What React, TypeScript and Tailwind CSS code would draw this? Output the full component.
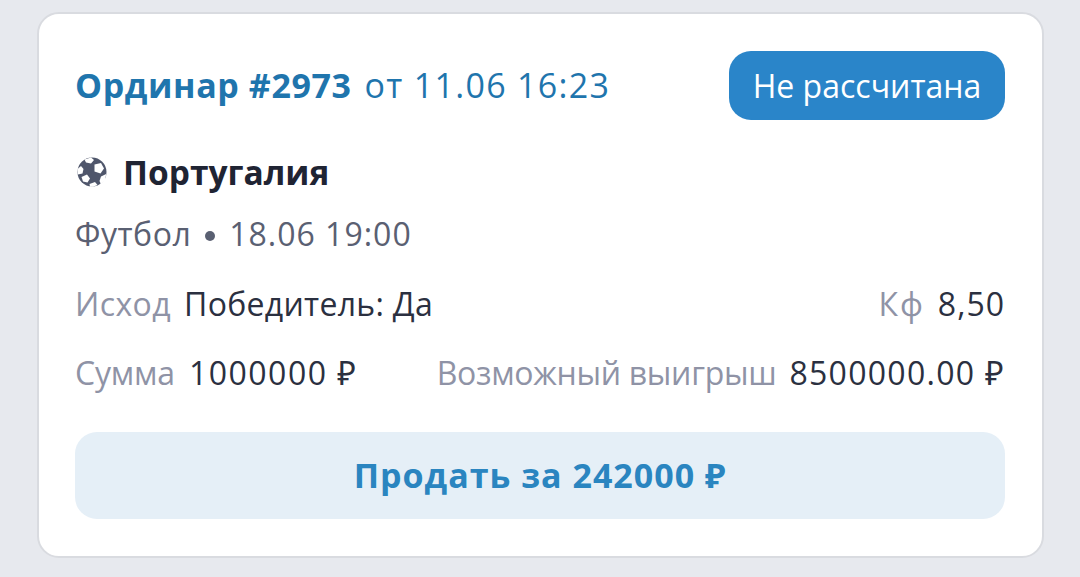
const Ball = () => (
    <svg viewBox="0 0 30 30" className="w-[30px] h-[30px] mr-[16px] ml-[2px] shrink-0">
        <circle cx="15" cy="15" r="14.5" fill="#4f566b" />
        <polygon points="7.5,2.5 14,0.5 17,3 14,6.5 9,5.5" fill="#ffffff" />
        <polygon points="17.5,7.5 24,6 27,11.5 23.5,16.5 17.5,14.5" fill="#ffffff" />
        <polygon points="0.5,12 4,9 6.5,12 5.5,16.5 0.8,17.5" fill="#ffffff" />
        <polygon points="4.5,20 10,17.5 13,21.5 10.5,25.5 6,24.5" fill="#ffffff" />
        <polygon points="12.5,27 18,25 20.5,28 16,29.7 13,29.7" fill="#ffffff" />
        <polygon points="24,19.5 29.2,17 28,23 24,27.5 22.5,24" fill="#ffffff" />
    </svg>
);

export default function App() {
    return (
        <div
            className="w-[1080px] h-[577px] bg-[#e7e9ee] pt-[12px] pl-[37px] overflow-hidden"
            style={{ fontFamily: '"Open Sans", "Noto Sans", sans-serif' }}
        >
            <div className="w-[1007px] h-[546px] bg-white border-2 border-[#d9dbe0] rounded-[22px] pl-[36px] pr-[37px] pt-[37px]">
                <div className="flex flex-row items-center justify-between h-[69px]">
                    <div className="text-[#1f75ad] text-[34px] flex flex-row items-baseline">
                        <span className="font-bold tracking-[0.6px]">Ординар #2973</span>
                        <span className="ml-[13px] tracking-[1.3px]">от 11.06 16:23</span>
                    </div>
                    <div className="h-[69px] w-[276px] bg-[#2a85c9] text-white rounded-[22px] flex items-center justify-center text-[32px]">
                        Не рассчитана
                    </div>
                </div>

                <div className="flex flex-row items-center mt-[32px] h-[40px]">
                    <Ball />
                    <span className="font-bold text-[33.5px] text-[#1f2433]">Португалия</span>
                </div>

                <div className="flex flex-row items-center mt-[22px] h-[40px] text-[32px] text-[#5a6072]">
                    <span className="tracking-[0.5px]">Футбол</span>
                    <span className="mx-[14px] w-[10px] h-[10px] rounded-full bg-[#5a6072] mt-[4px]" />
                    <span className="tracking-[1px]">18.06 19:00</span>
                </div>

                <div className="flex flex-row items-center justify-between mt-[30px] h-[40px] text-[32px]">
                    <div>
                        <span className="text-[#8f93a6] tracking-[0.4px]">Исход</span>
                        <span className="ml-[13px] text-[#2b3040] tracking-[0.3px]">Победитель: Да</span>
                    </div>
                    <div>
                        <span className="text-[#8f93a6] tracking-[2px]">Кф</span>
                        <span className="ml-[13px] text-[#2b3040] tracking-[1px]">8,50</span>
                    </div>
                </div>

                <div className="flex flex-row items-center justify-between mt-[29px] h-[40px] text-[32px]">
                    <div>
                        <span className="text-[#8f93a6] tracking-[-0.2px]">Сумма</span>
                        <span className="ml-[14px] text-[#2b3040] tracking-[1.5px]">1000000 ₽</span>
                    </div>
                    <div>
                        <span className="text-[#8f93a6] tracking-[-0.3px]">Возможный выигрыш</span>
                        <span className="ml-[13px] text-[#2b3040] tracking-[1.3px]">8500000.00 ₽</span>
                    </div>
                </div>

                <div className="mt-[39px] h-[87px] bg-[#e5eff7] rounded-[22px] flex items-center justify-center text-[#2a85c0] font-bold text-[34px] tracking-[1px]">
                    Продать за 242000 ₽
                </div>
            </div>
        </div>
    );
}
